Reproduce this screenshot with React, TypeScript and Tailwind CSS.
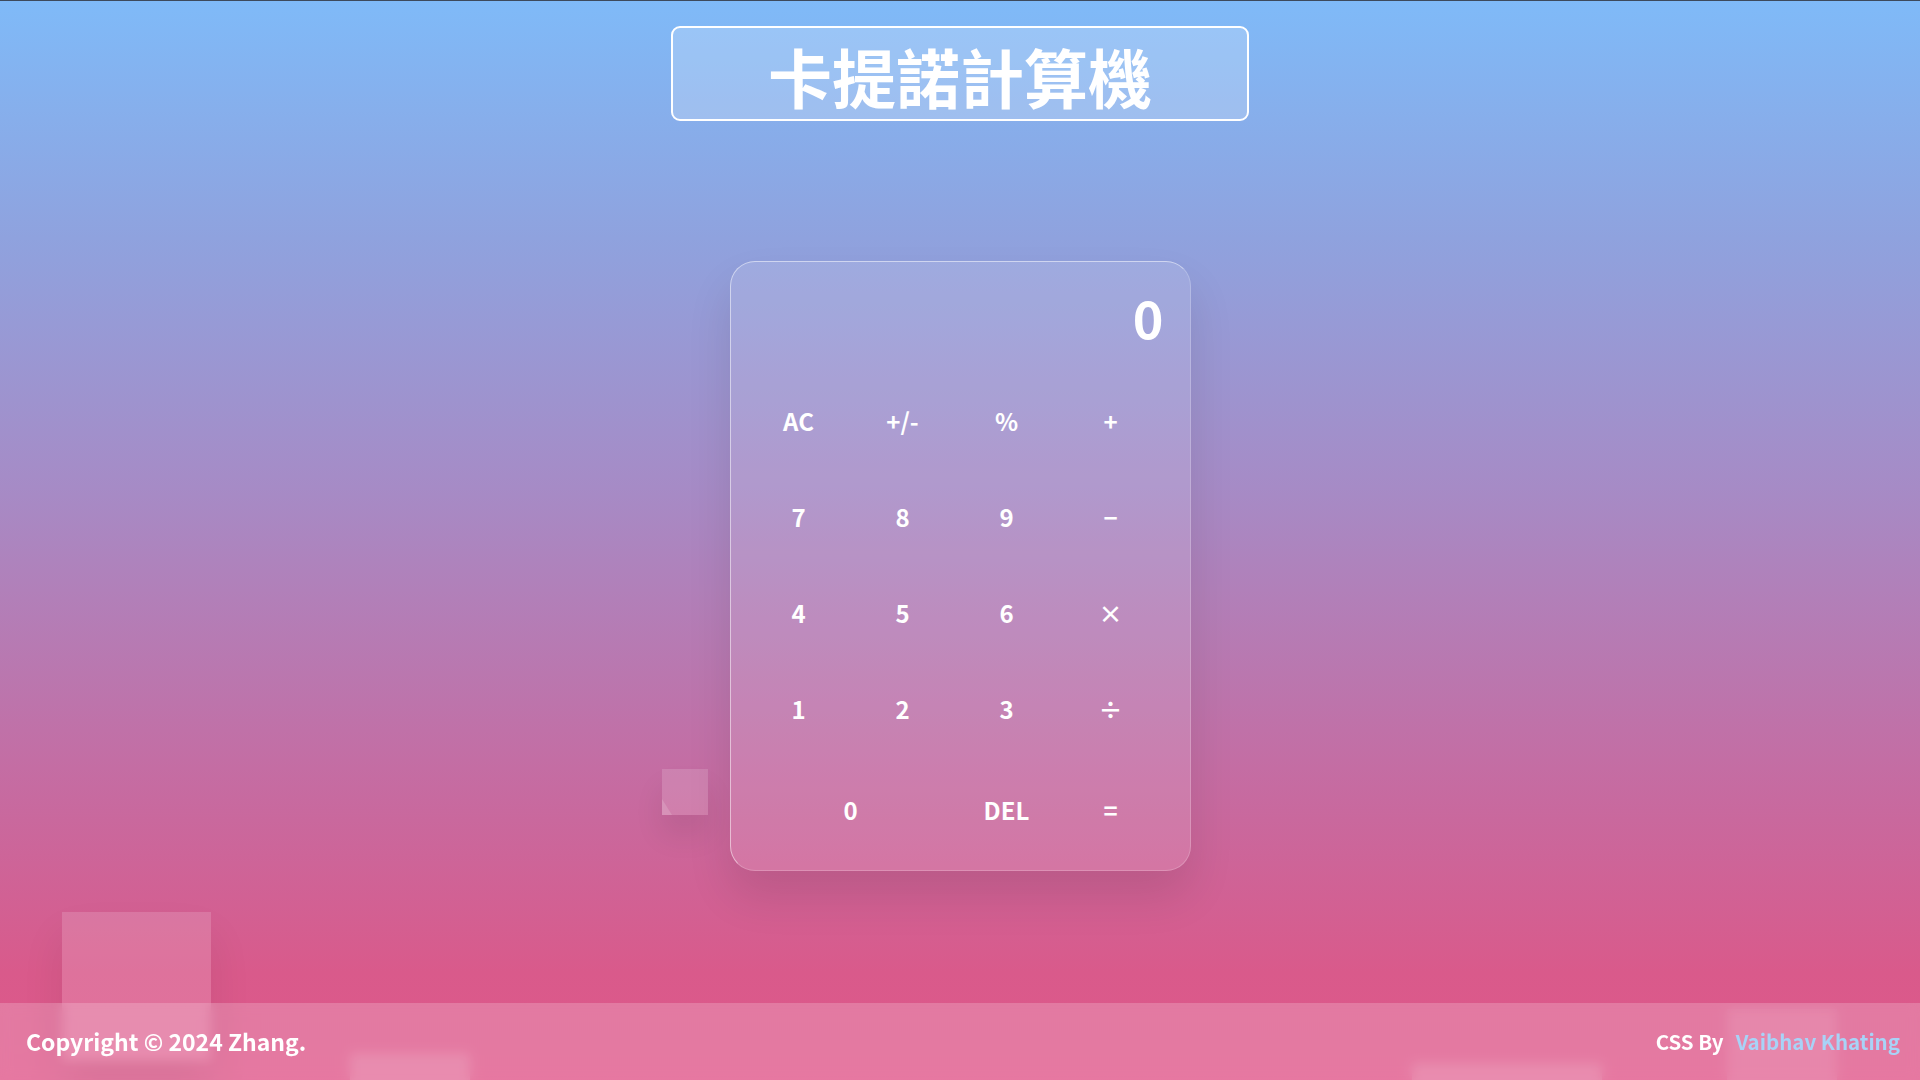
import React from 'react';

const keys: { label: string; span?: boolean }[][] = [
  [{ label: 'AC' }, { label: '+/-' }, { label: '%' }, { label: '+' }],
  [{ label: '7' }, { label: '8' }, { label: '9' }, { label: '−' }],
  [{ label: '4' }, { label: '5' }, { label: '6' }, { label: '×' }],
  [{ label: '1' }, { label: '2' }, { label: '3' }, { label: '÷' }],
];

function Key({ label, span }: { label: string; span?: boolean }) {
  return (
    <button
      className={`${span ? 'col-span-2' : ''} flex items-center justify-center text-[24px] leading-none font-bold text-white`}
    >
      {label}
    </button>
  );
}

export default function App() {
  return (
    <div
      className="relative flex h-[1080px] w-full flex-col items-center overflow-hidden border-t border-[#3d4a5c] bg-[linear-gradient(180deg,#7fbaf8_0%,#8fa2de_22%,#a68bc6_45%,#c56ca2_72%,#d95a8b_90%,#e0578a_100%)]"
      style={{ fontFamily: '"Noto Sans CJK TC", "Noto Sans", sans-serif' }}
    >
      {/* floating squares */}
      <div className="absolute left-[662px] top-[768px] h-[46px] w-[46px] overflow-hidden bg-white/15 shadow-[0_20px_30px_rgba(0,0,0,0.08)]">
        <div className="absolute bottom-0 left-0 h-[16px] w-[10px] bg-white/15 [clip-path:polygon(0_0,100%_100%,0_100%)]" />
      </div>
      <div className="absolute left-[62px] top-[911px] h-[149px] w-[149px] bg-white/15 shadow-[0_25px_40px_rgba(0,0,0,0.08)]" />
      <div className="absolute left-[350px] top-[1052px] h-[120px] w-[120px] bg-white/15" />
      <div className="absolute left-[1412px] top-[1062px] h-[190px] w-[190px] bg-white/15" />
      <div className="absolute left-[1727px] top-[1008px] h-[110px] w-[110px] bg-white/10" />

      <div className="relative mt-[25px] flex h-[95px] w-[578px] items-center justify-center rounded-[9px] border-2 border-white bg-white/20 pt-[2px]">
        <h1 className="text-[64px] leading-none font-bold text-white">卡提諾計算機</h1>
      </div>

      <div className="relative mt-[140px] flex h-[610px] w-[461px] flex-col rounded-[25px] border border-t-white/50 border-l-white/50 border-r-white/20 border-b-white/20 bg-white/[0.12] shadow-[0_25px_45px_rgba(0,0,0,0.1)]">
        <div className="pt-[29px] pr-[26px] text-right text-[52px] leading-none font-bold text-white">0</div>
        <div className="mt-[30px] grid grid-cols-4 auto-rows-[96px] pl-[16px] pr-[27px]">
          {keys.flat().map((k, i) => (
            <Key key={i} label={k.label} />
          ))}
        </div>
        <div className="grid h-[106px] grid-cols-4 pl-[16px] pr-[27px]">
          <Key label="0" span />
          <Key label="DEL" />
          <Key label="=" />
        </div>
      </div>

      <footer className="absolute bottom-0 left-0 flex h-[77px] w-full items-center justify-between bg-white/20 pl-[26px] pr-[20px] leading-none font-bold text-white backdrop-blur-[6px]">
        <span className="text-[23px]">Copyright © 2024 Zhang.</span>
        <span className="flex gap-[12px] text-[20.5px]">
          <span>CSS By</span>
          <a className="text-[#a8d3f7]">Vaibhav Khating</a>
        </span>
      </footer>
    </div>
  );
}
